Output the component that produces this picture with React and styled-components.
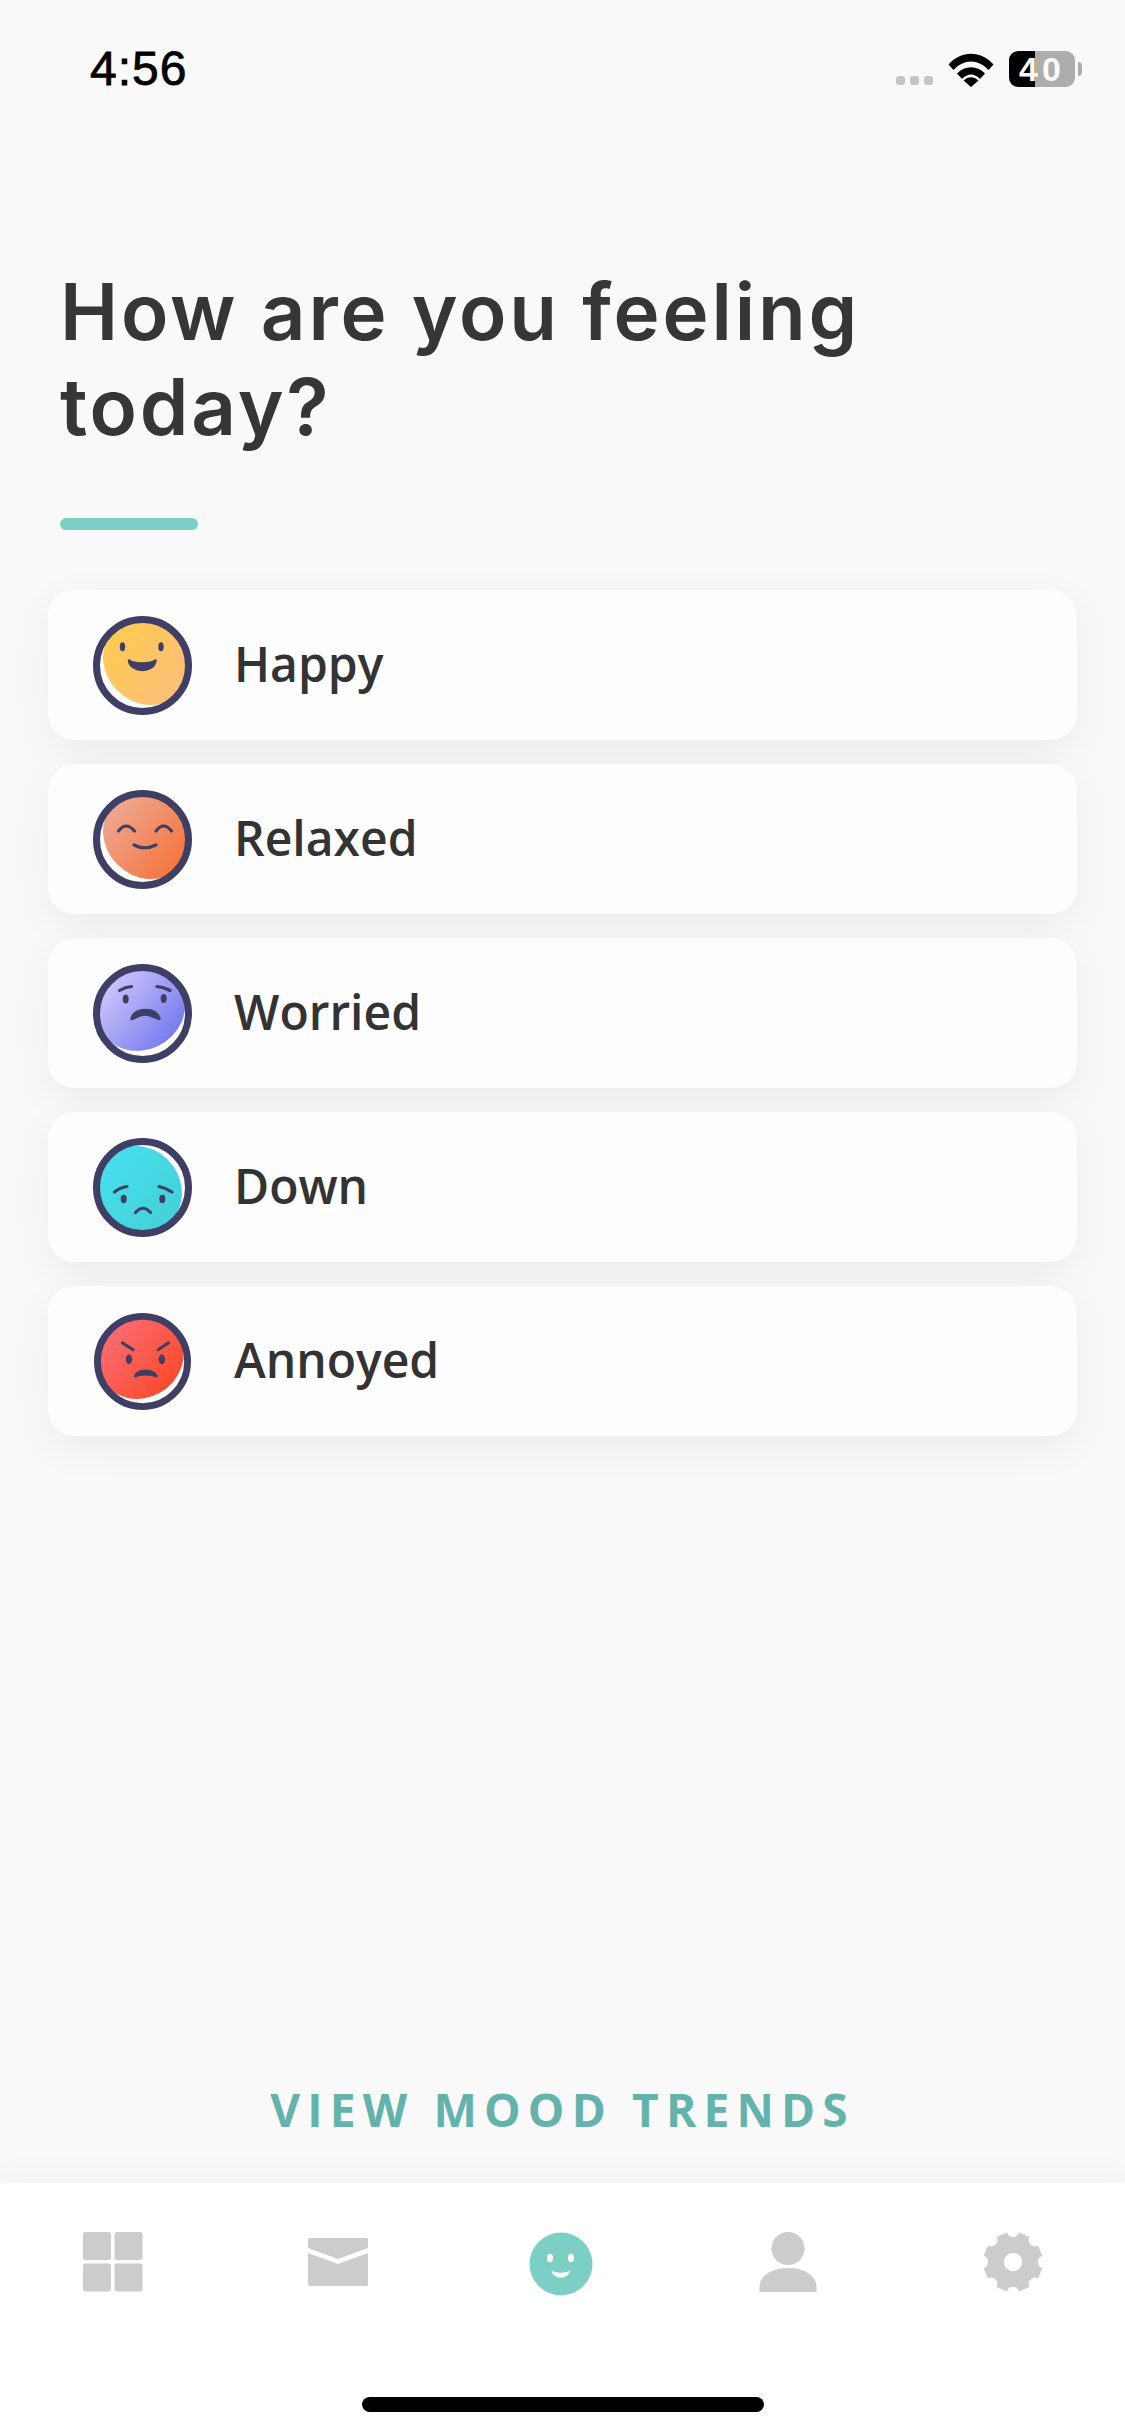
import React from "react";
import styled, { createGlobalStyle } from "styled-components";

const INK = "#3f3f66";

function Lines({ children }) {
  return (
    <g fill="none" stroke={INK} strokeWidth="3.2" strokeLinecap="round">
      {children}
    </g>
  );
}

// crescent = direction of the white sliver inside the ring, in degrees (0 = right, 90 = down)
const moods = [
  {
    name: "Happy",
    from: "#fdcb4f",
    to: "#ffbf7a",
    crescent: 135,
    width: 7,
    face: (
      <>
        <ellipse cx="29.5" cy="30.7" rx="2.7" ry="4.5" />
        <ellipse cx="68" cy="30.7" rx="2.7" ry="4.5" />
        <path d="M36 44.5C41 48.5 57 48.5 62.5 44.5C61.5 57 37.5 57 36 44.5Z" strokeWidth="2.500" stroke={INK} strokeLinejoin="round" />
      </>
    ),
  },
  {
    name: "Relaxed",
    from: "#eeaa96",
    to: "#f5743b",
    crescent: 135,
    width: 7,
    face: (
      <Lines>
        <path d="M25.5 41Q33 31 41.5 41" />
        <path d="M63 41Q70.5 31 78.5 41" />
        <path d="M41 55Q51.5 60.5 63 55" />
      </Lines>
    ),
  },
  {
    name: "Worried",
    from: "#d1c8fb",
    to: "#6d74ee",
    crescent: 65,
    width: 6.5,
    face: (
      <>
        <ellipse cx="32.7" cy="35" rx="3" ry="4.5" />
        <ellipse cx="70.7" cy="34.5" rx="3" ry="4.5" />
        <path d="M38.5 55C40 48 47 46 52 46C58 46 65 48 66.5 55C62 54 58 50.500 52 50.500C46 50.500 43 54 38.5 55Z" strokeWidth="2.500" stroke={INK} strokeLinejoin="round" />
        <Lines>
          <path d="M26.5 26.5Q32 23 38.5 22.5" />
          <path d="M64 22.5Q71 23 77 26.5" />
        </Lines>
      </>
    ),
  },
  {
    name: "Down",
    from: "#46dfee",
    to: "#45d0d8",
    crescent: -35,
    width: 5,
    face: (
      <>
        <ellipse cx="30.7" cy="61" rx="3" ry="4.2" />
        <ellipse cx="69.3" cy="61" rx="3" ry="4.2" />
        <Lines>
          <path d="M21.5 54Q27 49.5 34 48.5" />
          <path d="M66 48.5Q73 50 79 54" />
          <path d="M42.5 74.5Q50 66 57.5 74.5" />
        </Lines>
      </>
    ),
  },
  {
    name: "Annoyed",
    from: "#fb6d74",
    to: "#fb4726",
    crescent: 60,
    width: 6,
    size: 97,
    face: (
      <>
        <ellipse cx="35.7" cy="47.3" rx="3.3" ry="5" />
        <ellipse cx="69.3" cy="47.3" rx="3.3" ry="5" />
        <path d="M42 64.5C44 60 48 59 52.5 59C57 59 61 60 64 64.5C60 63 57 62.5 52.5 62.5C48 62.5 45 63 42 64.5Z" strokeWidth="2.500" stroke={INK} strokeLinejoin="round" />
        <Lines>
          <path d="M29 30.5L40 37.5" />
          <path d="M65.5 37.5L76 30.5" />
        </Lines>
      </>
    ),
  },
];

const MoodFace = ({ mood }) => {
  const id = `mood-${mood.name}`;
  const shift = 4.2;
  const rad = (mood.crescent * Math.PI) / 180;
  const cx = 49.5 - shift * Math.cos(rad);
  const cy = 49.5 - shift * Math.sin(rad);
  return (
    <FaceIcon viewBox="0 0 99 99" $size={mood.size || 99}>
      <defs>
        <linearGradient id={id} x1="0.1" y1="0.1" x2="0.95" y2="0.8">
          <stop offset="0" stopColor={mood.from} />
          <stop offset="1" stopColor={mood.to} />
        </linearGradient>
        <mask id={`${id}-mask`}>
          <ellipse
            cx={cx}
            cy={cy}
            rx="45"
            ry={42.5 - mood.width + shift}
            fill="#fff"
            transform={`rotate(${mood.crescent - 90} ${cx} ${cy})`}
          />
        </mask>
      </defs>
      <circle cx="49.5" cy="49.5" r="44" fill={`url(#${id})`} mask={`url(#${id}-mask)`} />
      <circle cx="49.5" cy="49.5" r="46" fill="none" stroke={INK} strokeWidth="7" />
      <g fill={INK}>{mood.face}</g>
    </FaceIcon>
  );
};

// eight teeth with round bites between them
const gearPath = () => {
  const point = (deg) => {
    const a = (deg * Math.PI) / 180;
    return `${(30 + 30 * Math.cos(a)).toFixed(2)} ${(30 + 30 * Math.sin(a)).toFixed(2)}`;
  };
  let d = "";
  for (let k = 0; k < 8; k++) {
    const mid = 22.5 + k * 45;
    d += `${k === 0 ? "M" : "L"}${point(mid - 11)}L${point(mid + 11)}A6.200 6.200 0 0 0 ${point(mid + 34)}`;
  }
  return `${d}ZM30 20.800a9.200 9.200 0 1 0 0 18.400a9.200 9.200 0 1 0 0-18.400Z`;
};

const GridIcon = () => (
  <TabSvg width="60" height="60" viewBox="0 0 60 60" fill="#cccccc">
    <rect x="0" y="0" width="28" height="28" rx="2.5" />
    <rect x="31.5" y="0" width="28" height="28" rx="2.5" />
    <rect x="0" y="31.5" width="28" height="28" rx="2.5" />
    <rect x="31.5" y="31.5" width="28" height="28" rx="2.5" />
  </TabSvg>
);

const MailIcon = () => (
  <TabSvg width="60" height="60" viewBox="0 0 60 60" fill="#cccccc">
    <path d="M2 6H58A2 2 0 0 1 60 8V16L30 27L0 16V8A2 2 0 0 1 2 6Z" />
    <path d="M0 21L30 32L60 21V52A2 2 0 0 1 58 54H2A2 2 0 0 1 0 52Z" />
  </TabSvg>
);

const SmileIcon = () => (
  <TabSvg width="64" height="64" viewBox="0 0 64 64">
    <circle cx="32" cy="32" r="31.5" fill="#7ccfc4" />
    <ellipse cx="21" cy="26" rx="3" ry="4.2" fill="#fff" />
    <ellipse cx="42" cy="26" rx="3" ry="4.2" fill="#fff" />
    <path d="M22.5 38.5C27 41.5 36 41.5 41 38.5C40 48 24 48 22.5 38.5Z" fill="#fff" />
  </TabSvg>
);

const PersonIcon = () => (
  <TabSvg width="60" height="60" viewBox="0 0 60 60" fill="#cccccc">
    <ellipse cx="30" cy="16.5" rx="16.5" ry="16.5" />
    <path d="M1.5 60V55C1.5 44 13 36 30 36C47 36 58.5 44 58.5 55V60Z" />
  </TabSvg>
);

const GearIcon = () => (
  <TabSvg width="60" height="60" viewBox="0 0 60 60" fill="#cccccc">
    <path fillRule="evenodd" d={gearPath()} />
  </TabSvg>
);

const WifiIcon = () => (
  <svg width="46" height="34" viewBox="0 0 46 34">
    <path d="M0.500 11.500C13 -3 33 -3 45.500 11.500L40.500 17C30 5.500 16 5.500 5.500 17Z" />
    <path d="M9 20.500C17 12 29 12 37 20.500L32 26C26.500 20 19.500 20 14 26Z" />
    <path d="M23 34L15.500 27.500C20 23 26 23 30.500 27.500Z" />
  </svg>
);

const App = () => {
  return (
    <Page>
      <GlobalStyle />
      <StatusBar>
        <Time>4:56</Time>
        <StatusIcons>
          <Dots>
            <Dot />
            <Dot />
            <Dot />
          </Dots>
          <WifiIcon />
          <Battery>
            <BatteryLevel>40</BatteryLevel>
          </Battery>
        </StatusIcons>
      </StatusBar>
      <Main>
        <Title>
          How are you feeling
          <br />
          today?
        </Title>
        <Accent />
        <MoodList>
          {moods.map((mood) => (
            <MoodCard key={mood.name}>
              <MoodFace mood={mood} />
              <MoodName>{mood.name}</MoodName>
            </MoodCard>
          ))}
        </MoodList>
      </Main>
      <TrendsLink>VIEW MOOD TRENDS</TrendsLink>
      <TabBar>
        <Tabs>
          <Tab>
            <GridIcon />
          </Tab>
          <Tab>
            <MailIcon />
          </Tab>
          <ActiveTab>
            <SmileIcon />
          </ActiveTab>
          <Tab>
            <PersonIcon />
          </Tab>
          <Tab>
            <GearIcon />
          </Tab>
        </Tabs>
        <HomeIndicator />
      </TabBar>
    </Page>
  );
};

const GlobalStyle = createGlobalStyle`
  html, body {
    margin: 0;
    padding: 0;
    background: #f9f9f9;
  }
  * {
    box-sizing: border-box;
  }
`;

const Page = styled.div`
  width: 1125px;
  height: 2436px;
  display: flex;
  flex-direction: column;
  background: #f9f9f9;
  overflow: hidden;
`;

const StatusBar = styled.div`
  height: 140px;
  padding: 51px 50px 0 90px;
  display: flex;
  justify-content: space-between;
  align-items: flex-start;
`;

const Time = styled.div`
  font-family: "Liberation Sans", sans-serif;
  font-size: 48px;
  line-height: 36px;
  font-weight: 400;
  letter-spacing: 1px;
  -webkit-text-stroke: 0.8px #000;
  color: #000;
`;

const StatusIcons = styled.div`
  display: flex;
  align-items: flex-end;
  gap: 15px;
  height: 36px;
`;

const Dots = styled.div`
  display: flex;
  gap: 5px;
  margin-bottom: 2px;
`;

const Dot = styled.span`
  width: 9px;
  height: 9px;
  border-radius: 3px;
  background: #c4c4c4;
`;

const Battery = styled.div`
  position: relative;
  width: 66px;
  height: 36px;
  border-radius: 9px;
  background: linear-gradient(90deg, #000 26px, #adadad 26px);
  display: flex;
  align-items: center;
  justify-content: center;
  &::after {
    content: "";
    position: absolute;
    right: -7px;
    top: 11px;
    width: 4px;
    height: 14px;
    background: #adadad;
    border-radius: 0 7px 7px 0;
  }
`;

const BatteryLevel = styled.span`
  font-family: "Liberation Sans", sans-serif;
  font-size: 34px;
  font-weight: 700;
  letter-spacing: 4px;
  color: #fbfbfb;
  line-height: 1;
`;

const Main = styled.main`
  flex: 1;
  padding: 124px 48px 0;
`;

const Title = styled.h1`
  margin: 0 0 0 12px;
  font-family: Inter, sans-serif;
  font-size: 78px;
  line-height: 95px;
  font-weight: 600;
  letter-spacing: 2.8px;
  color: #363636;
`;

const Accent = styled.div`
  width: 138px;
  height: 12px;
  margin: 64px 0 60px 12px;
  border-radius: 6px;
  background: #7ccfc4;
`;

const MoodList = styled.div`
  display: flex;
  flex-direction: column;
  gap: 24px;
`;

const MoodCard = styled.div`
  height: 150px;
  display: flex;
  align-items: center;
  padding-left: 45px;
  gap: 42px;
  background: #fdfdfd;
  border-radius: 26px;
  box-shadow: 0 12px 40px rgba(0, 0, 0, 0.06);
`;

const FaceIcon = styled.svg`
  width: ${(props) => props.$size}px;
  height: ${(props) => props.$size}px;
  margin: 0 ${(props) => (99 - props.$size) / 2}px;
  flex: none;
`;

const MoodName = styled.span`
  font-family: "Open Sans", sans-serif;
  font-size: 48px;
  font-weight: 550;
  line-height: 64px;
  margin-top: -2px;
  color: #333333;
`;

const TrendsLink = styled.div`
  height: 106px;
  text-align: center;
  font-family: "Open Sans", sans-serif;
  font-size: 46px;
  line-height: 64px;
  font-weight: 700;
  letter-spacing: 7.2px;
  color: #63b3ac;
`;

const TabBar = styled.nav`
  height: 253px;
  background: #ffffff;
  box-shadow: 0 -8px 30px rgba(0, 0, 0, 0.03);
  display: flex;
  flex-direction: column;
  align-items: center;
  padding-top: 49px;
`;

const Tabs = styled.div`
  width: 100%;
  display: grid;
  grid-template-columns: repeat(5, 1fr);
`;

const Tab = styled.div`
  height: 64px;
  display: flex;
  align-items: flex-start;
  justify-content: center;
`;

const ActiveTab = styled(Tab)`
  padding-right: 4px;
`;

const TabSvg = styled.svg`
  display: block;
`;

const HomeIndicator = styled.div`
  width: 402px;
  height: 15px;
  margin-top: 101px;
  border-radius: 8px;
  background: #000;
`;

export default App;
